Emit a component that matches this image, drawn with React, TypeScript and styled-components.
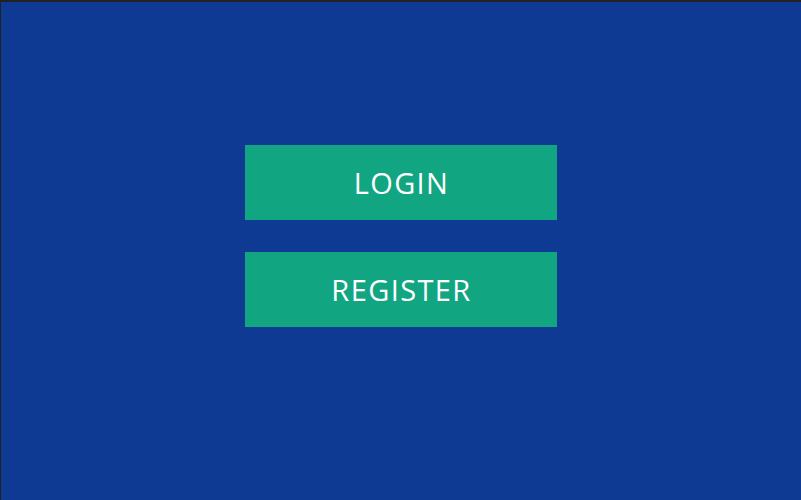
import React from "react";
import styled, { createGlobalStyle } from "styled-components";

const Global = createGlobalStyle`
  html, body { margin: 0; padding: 0; background: #222222; }
  body { font-family: "Open Sans", "Liberation Sans", sans-serif; }
`;

const Screen = styled.div`
  box-sizing: border-box;
  width: 801px;
  height: 500px;
  border-top: 2px solid #222222;
  border-left: 1px solid #222222;
  background: #0f3a94;
  display: flex;
  flex-direction: column;
  align-items: center;
  padding-top: 143px;
  gap: 32px;
`;

const ActionButton = styled.button`
  width: 312px;
  height: 75px;
  border: none;
  margin: 0;
  padding: 0 0 0 1px;
  background: #12a582;
  color: #ffffff;
  font-family: "Open Sans", "Liberation Sans", sans-serif;
  font-size: 29px;
  font-weight: 400;
  letter-spacing: 1.4px;
  cursor: pointer;
  display: flex;
  align-items: center;
  justify-content: center;
`;

export default function App() {
  return (
    <>
      <Global />
      <Screen>
        <ActionButton>LOGIN</ActionButton>
        <ActionButton>REGISTER</ActionButton>
      </Screen>
    </>
  );
}
